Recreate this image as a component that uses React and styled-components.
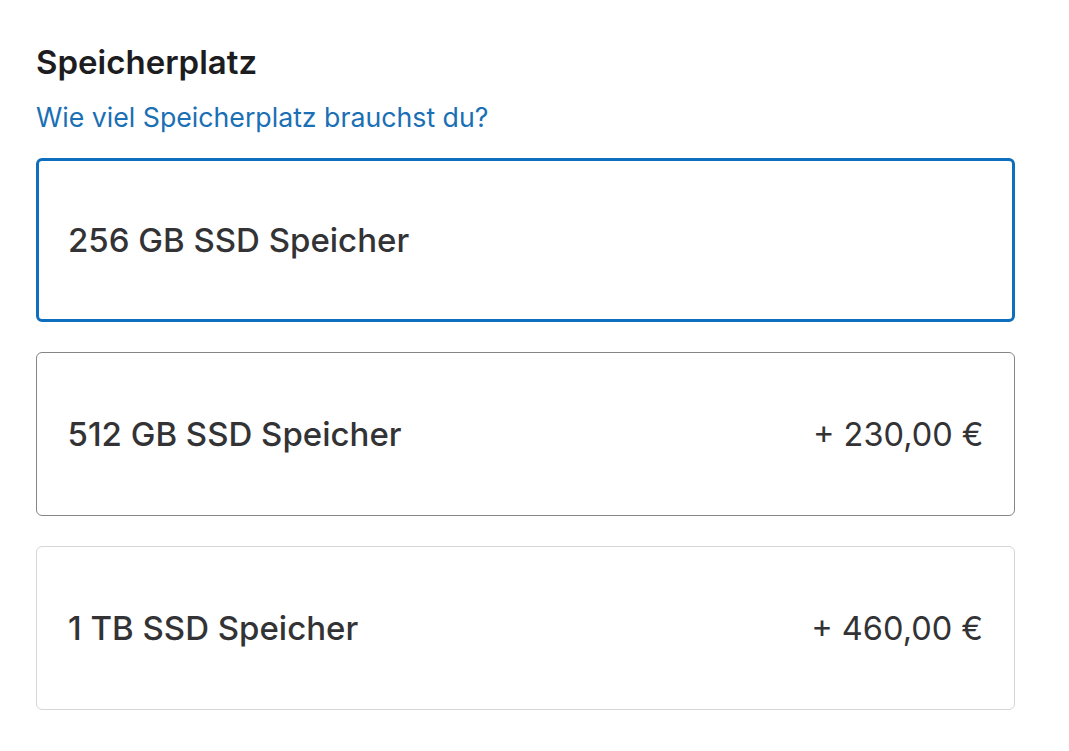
import styled, { createGlobalStyle } from 'styled-components';

const GlobalStyle = createGlobalStyle`
  html, body {
    margin: 0;
    padding: 0;
    background: #ffffff;
  }

  body {
    font-family: Inter, "Noto Sans", "Liberation Sans", sans-serif;
    -webkit-font-smoothing: antialiased;
  }
`;

const Wrapper = styled.section`
  width: 979px;
  padding: 40px 0 0 36px;
`;

const Title = styled.h2`
  margin: 0;
  font-size: 33px;
  line-height: 44px;
  font-weight: 600;
  color: #1d1d1f;
`;

const HelpLink = styled.a`
  display: block;
  width: fit-content;
  margin-top: 16px;
  font-size: 26.7px;
  line-height: 34px;
  color: #1a6fb5;
  text-decoration: none;
  cursor: pointer;
`;

const Options = styled.div`
  margin-top: 24px;
  display: flex;
  flex-direction: column;
  gap: 30px;
`;

const Option = styled.label`
  box-sizing: border-box;
  height: 164px;
  display: flex;
  align-items: center;
  justify-content: space-between;
  border-radius: 6px;
  background: #ffffff;
  cursor: pointer;
  border: ${(props) => {
    if (props.selected) return '3px solid #0f6fbf';
    if (props.hovered) return '1.5px solid #868686';
    return '1px solid #d6d6d6';
  }};
  padding: 0 ${(props) => (props.selected ? '29px' : props.hovered ? '30.5px' : '31px')};
`;

const OptionName = styled.span`
  font-size: 33px;
  font-weight: 500;
  color: #333336;
`;

const OptionPrice = styled.span`
  font-size: 32.5px;
  font-weight: 400;
  color: #333336;
`;

const options = [
  { id: '256', name: '256 GB SSD Speicher', price: null, state: 'selected' },
  { id: '512', name: '512 GB SSD Speicher', price: '+ 230,00 €', state: 'hovered' },
  { id: '1tb', name: '1 TB SSD Speicher', price: '+ 460,00 €', state: 'default' },
];

function App() {
  return (
    <>
      <GlobalStyle />
      <Wrapper>
        <Title>Speicherplatz</Title>
        <HelpLink>Wie viel Speicherplatz brauchst du?</HelpLink>
        <Options>
          {options.map((option) => (
            <Option
              key={option.id}
              selected={option.state === 'selected'}
              hovered={option.state === 'hovered'}
            >
              <OptionName>{option.name}</OptionName>
              {option.price && <OptionPrice>{option.price}</OptionPrice>}
            </Option>
          ))}
        </Options>
      </Wrapper>
    </>
  );
}

export default App;
